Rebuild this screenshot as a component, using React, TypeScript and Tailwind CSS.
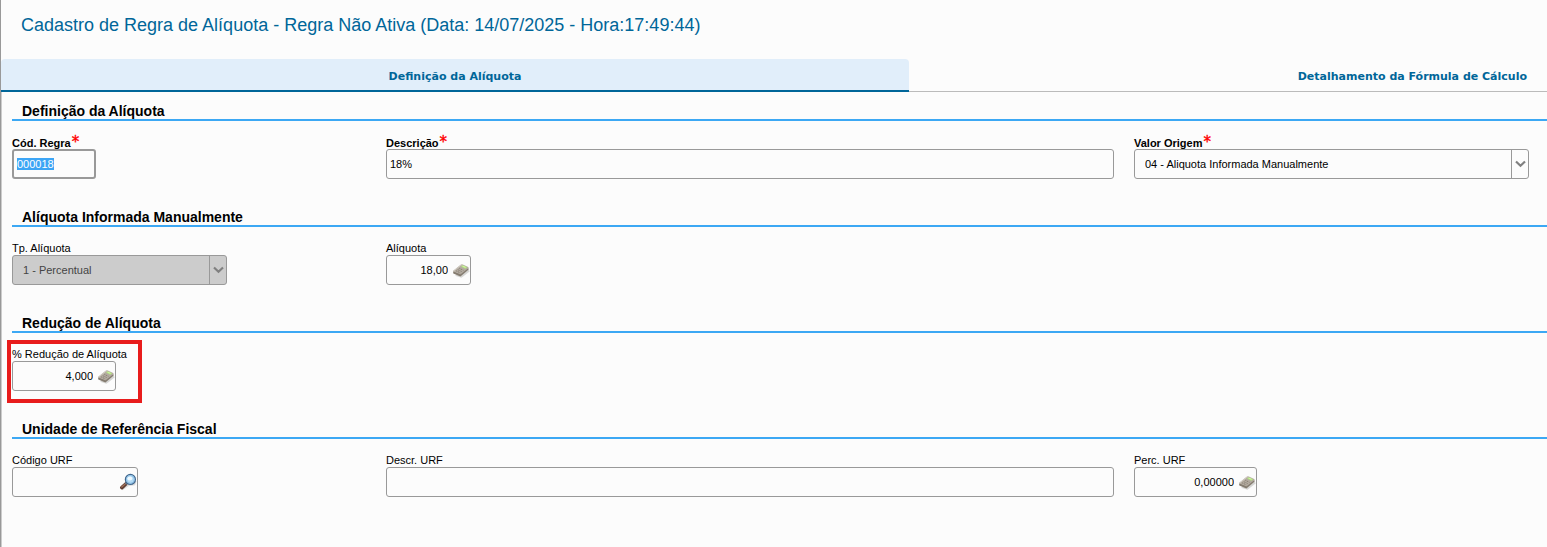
import { useEffect, useRef, useState } from "react";
import type { ReactNode } from "react";

const tabs = ["Definição da Alíquota", "Detalhamento da Fórmula de Cálculo"];

const CalculatorIcon = () => (
  <svg width="18" height="18" viewBox="0 0 18 18" aria-hidden="true">
    <path d="M3 14.8 L9.5 16.8 L17.6 10.4 L16.4 7.6 Z" fill="#d6d6d4" />
    <path d="M1 10.3 L1.3 12.4 L8.4 15.4 L16.4 8.8 L16.4 6.8 L8 12 Z" fill="#857c70" />
    <path d="M1.2 9.8 L8.6 3.8 Q9.6 3.1 10.8 3.5 L16.2 6 Q16.9 6.5 16.2 7.2 L9 13 Q8.4 13.5 7.6 13.1 L1.4 10.6 Q0.8 10.2 1.2 9.8 Z" fill="#b3aba0" />
    <path d="M1.6 10 L9 4.2 Q9.8 3.7 10.8 4" fill="none" stroke="#d8d3ca" strokeWidth="0.8" />
    <path d="M9 5.6 L10.8 4.2 L15.2 6.3 L13.4 7.8 Z" fill="#b4e37f" />
    <path d="M10.4 5.3 L11 4.8 L13.8 6.1 L13.2 6.7 Z" fill="#d3f5ab" />
    <path d="M7.4 7.4 L11.4 9.3 M5.8 8.7 L9.8 10.6 M4.2 9.9 L8.2 11.8" stroke="#776d61" strokeWidth="0.8" strokeDasharray="1.1 0.8" />
  </svg>
);

const SearchIcon = () => (
  <svg width="18" height="18" viewBox="0 0 18 18" aria-hidden="true">
    <path d="M3 16.5 L9 12.5 L15.5 11.5 L16.8 8" fill="none" stroke="#dcdcdc" strokeWidth="1.6" />
    <path d="M2.8 14.6 L6.8 11" stroke="#5a3a30" strokeWidth="3.6" strokeLinecap="round" />
    <path d="M2.8 14 L6.4 10.8" stroke="#a0705a" strokeWidth="1.4" strokeLinecap="round" />
    <path d="M6.6 11 L8.2 9.6" stroke="#6f7b88" strokeWidth="2" />
    <circle cx="11.4" cy="6.4" r="5" fill="#b5dcf6" stroke="#43698f" strokeWidth="1.3" />
    <circle cx="11.4" cy="6.4" r="3.9" fill="none" stroke="#83b9e2" strokeWidth="0.8" />
    <ellipse cx="10.8" cy="5.4" rx="2.5" ry="2" fill="#eef9ff" />
  </svg>
);

const Section = ({ title, children }: { title: string; children: ReactNode }) => (
  <section>
    <h2 className="border-b-2 border-[#3ca8f4] pl-2.5 text-[14px] leading-4 font-bold text-black">
      {title}
    </h2>
    <div className="grid grid-cols-[374fr_748fr_413fr] pt-3.5">{children}</div>
  </section>
);

const Field = ({
  id,
  label,
  required,
  children,
}: {
  id: string;
  label: string;
  required?: boolean;
  children: ReactNode;
}) => (
  <div>
    <label
      htmlFor={id}
      className={`flex h-3.5 text-[11px] text-black ${required ? "leading-4 font-bold" : "leading-[14px]"}`}
    >
      {label}
      {required && (
        <span className="pl-px font-['DejaVu_Sans',Verdana,sans-serif] text-[15px] leading-[14px] font-normal text-[#ff0000] [-webkit-text-stroke:0.4px_#ff0000]">
          *
        </span>
      )}
    </label>
    {children}
  </div>
);

const SelectBox = ({ id, value, disabled }: { id: string; value: string; disabled?: boolean }) => (
  <div className="relative">
    <select
      id={id}
      disabled={disabled}
      defaultValue={value}
      className="block h-[30px] w-full appearance-none rounded-[3px] border border-[#999999] bg-[#fcfcfc] pr-5 pl-2.5 text-[11px] text-black disabled:bg-[#cccccc] disabled:text-[#444444] disabled:opacity-100"
    >
      <option value={value}>{value}</option>
    </select>
    <span className="pointer-events-none absolute inset-y-0 right-0 flex w-[18px] items-center border-l border-[#999999] pl-[3px]">
      <svg width="11" height="8" viewBox="0 0 11 8" fill="none" stroke="#808080" strokeWidth="2.2">
        <path d="M1 1.5 L5.5 5.8 L10 1.5" />
      </svg>
    </span>
  </div>
);

const IconInput = ({
  id,
  value,
  width,
  action,
  icon,
}: {
  id: string;
  value: string;
  width: string;
  action: string;
  icon: ReactNode;
}) => (
  <div className={`flex h-[30px] items-center rounded-[3px] border border-[#999999] ${width}`}>
    <input
      id={id}
      defaultValue={value}
      className="h-full min-w-0 flex-1 bg-transparent pr-1 text-right text-[11px] text-black outline-none"
    />
    <button type="button" aria-label={action} className="shrink-0">
      {icon}
    </button>
  </div>
);

const App = () => {
  const [active, setActive] = useState(0);
  const codeRef = useRef<HTMLInputElement>(null);

  useEffect(() => {
    codeRef.current?.focus();
    codeRef.current?.select();
  }, []);

  return (
    <div className="min-h-screen border-l border-[#999999] bg-[#fcfcfc] font-['Liberation_Sans',Arial,sans-serif]">
      <h1 className="px-5 pt-[13px] pb-[22px] text-[18px] leading-6 text-[#006699]">
        Cadastro de Regra de Alíquota - Regra Não Ativa (Data: 14/07/2025 - Hora:17:49:44)
      </h1>

      <div role="tablist" className="grid grid-cols-[908fr_638fr]">
        {tabs.map((tab, idx) => (
          <button
            key={tab}
            type="button"
            role="tab"
            aria-selected={active === idx}
            onClick={() => setActive(idx)}
            className={`h-[33px] pt-[5px] font-['DejaVu_Sans',Verdana,sans-serif] text-[11px] font-bold text-[#006699] ${
              idx === 0 ? "text-center" : "pr-5 text-right"
            } ${active === idx ? "rounded-t-[4px] border-b-2 border-[#006699] bg-[#e1eefa]" : "border-b border-[#bbbbbb]"}`}
          >
            {tab}
          </button>
        ))}
      </div>

      <form className="flex min-h-[455px] flex-col gap-[30px] border-l border-[#cccccc] pt-[11px] pl-2.5">
        <Section title="Definição da Alíquota">
          <Field id="codigo" label="Cód. Regra" required>
            <input
              id="codigo"
              ref={codeRef}
              defaultValue="000018"
              className="block h-[30px] w-21 rounded-[3px] border-2 border-[#999999] px-[3px] text-[11px] text-black outline-none selection:bg-[#3ca5f5] selection:text-white"
            />
          </Field>
          <Field id="descricao" label="Descrição" required>
            <div className="pr-5">
              <input
                id="descricao"
                defaultValue="18%"
                className="block h-[30px] w-full rounded-[3px] border border-[#999999] px-[3px] text-[11px] text-black"
              />
            </div>
          </Field>
          <Field id="origem" label="Valor Origem" required>
            <div className="pr-[18px]">
              <SelectBox id="origem" value="04 - Aliquota Informada Manualmente" />
            </div>
          </Field>
        </Section>

        <Section title="Alíquota Informada Manualmente">
          <Field id="tipo" label="Tp. Alíquota">
            <div className="w-[215px]">
              <SelectBox id="tipo" value="1 - Percentual" disabled />
            </div>
          </Field>
          <Field id="aliquota" label="Alíquota">
            <IconInput id="aliquota" value="18,00" width="w-[85px]" action="Calculadora" icon={<CalculatorIcon />} />
          </Field>
        </Section>

        <Section title="Redução de Alíquota">
          <div className="relative w-fit">
            <Field id="reducao" label="% Redução de Alíquota">
              <IconInput id="reducao" value="4,000" width="w-26" action="Calculadora" icon={<CalculatorIcon />} />
            </Field>
            <span className="pointer-events-none absolute -top-[7px] -right-[15px] -bottom-3 -left-[5px] border-4 border-[#e81c1c]" />
          </div>
        </Section>

        <Section title="Unidade de Referência Fiscal">
          <Field id="codigo-urf" label="Código URF">
            <IconInput id="codigo-urf" value="" width="w-[126px]" action="Pesquisar" icon={<SearchIcon />} />
          </Field>
          <Field id="descr-urf" label="Descr. URF">
            <div className="pr-5">
              <input
                id="descr-urf"
                className="block h-[30px] w-full rounded-[3px] border border-[#999999] px-[3px] text-[11px] text-black"
              />
            </div>
          </Field>
          <Field id="perc-urf" label="Perc. URF">
            <IconInput id="perc-urf" value="0,00000" width="w-[123px]" action="Calculadora" icon={<CalculatorIcon />} />
          </Field>
        </Section>
      </form>
    </div>
  );
};

export default App;
